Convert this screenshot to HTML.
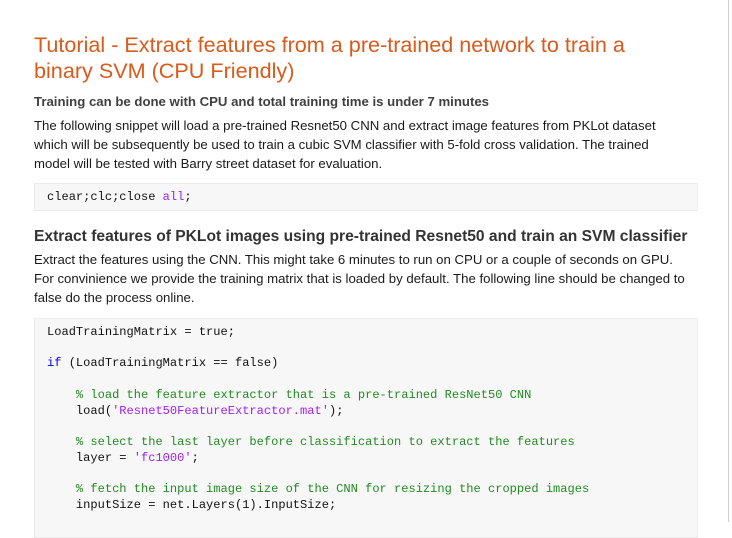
<!DOCTYPE html>
<html><head><style>
body{margin:0;width:732px;height:522px;background:#fff;overflow:hidden;position:relative;font-family:"Liberation Sans",Arial,sans-serif;}
.r{position:absolute;right:3px;top:0;width:1px;height:522px;background:#d0d0d0;}
.t{position:absolute;white-space:nowrap;}
h1{position:absolute;left:34px;top:32px;margin:0;font-weight:normal;font-size:21.6px;line-height:26px;color:#d95a1a;white-space:nowrap;}
.sub{left:34px;top:94px;font-weight:bold;font-size:13.2px;color:#404040;}
.p{left:34px;font-size:13.2px;line-height:19px;color:#1a1a1a;}
h2{position:absolute;left:34px;top:228px;margin:0;font-size:15.6px;color:#333;white-space:nowrap;}
.code{position:absolute;left:34px;width:664px;background:#f7f7f7;border:1px solid #ececec;box-sizing:border-box;}
pre{margin:0;font-family:"Liberation Mono",monospace;font-size:12.05px;line-height:15.7px;color:#111;padding-left:12px;}
.k{color:#0000ff}.s{color:#a020f0}.c{color:#228b22}
</style></head><body>
<div class="r"></div>
<h1>Tutorial - Extract features from a pre-trained network to train a<br>binary SVM (CPU Friendly)</h1>
<div class="t sub">Training can be done with CPU and total training time is under 7 minutes</div>
<div class="t p" style="top:116px">The following snippet will load a pre-trained Resnet50 CNN and extract image features from PKLot dataset<br>which will be subsequently be used to train a cubic SVM classifier with 5-fold cross validation. The trained<br>model will be tested with Barry street dataset for evaluation.</div>
<div class="code" style="top:183px;height:28px"><pre style="padding-top:6px">clear;clc;close <span class="s">all</span>;</pre></div>
<h2>Extract features of PKLot images using pre-trained Resnet50 and train an SVM classifier</h2>
<div class="t p" style="top:250px">Extract the features using the CNN. This might take 6 minutes to run on CPU or a couple of seconds on GPU.<br>For convinience we provide the training matrix that is loaded by default. The following line should be changed to<br>false do the process online.</div>
<div class="code" style="top:318px;height:220px"><pre style="padding-top:6px">LoadTrainingMatrix = true;

<span class="k">if</span> (LoadTrainingMatrix == false)

    <span class="c">% load the feature extractor that is a pre-trained ResNet50 CNN</span>
    load(<span class="s">'Resnet50FeatureExtractor.mat'</span>);

    <span class="c">% select the last layer before classification to extract the features</span>
    layer = <span class="s">'fc1000'</span>;

    <span class="c">% fetch the input image size of the CNN for resizing the cropped images</span>
    inputSize = net.Layers(1).InputSize;</pre></div>
</body></html>
